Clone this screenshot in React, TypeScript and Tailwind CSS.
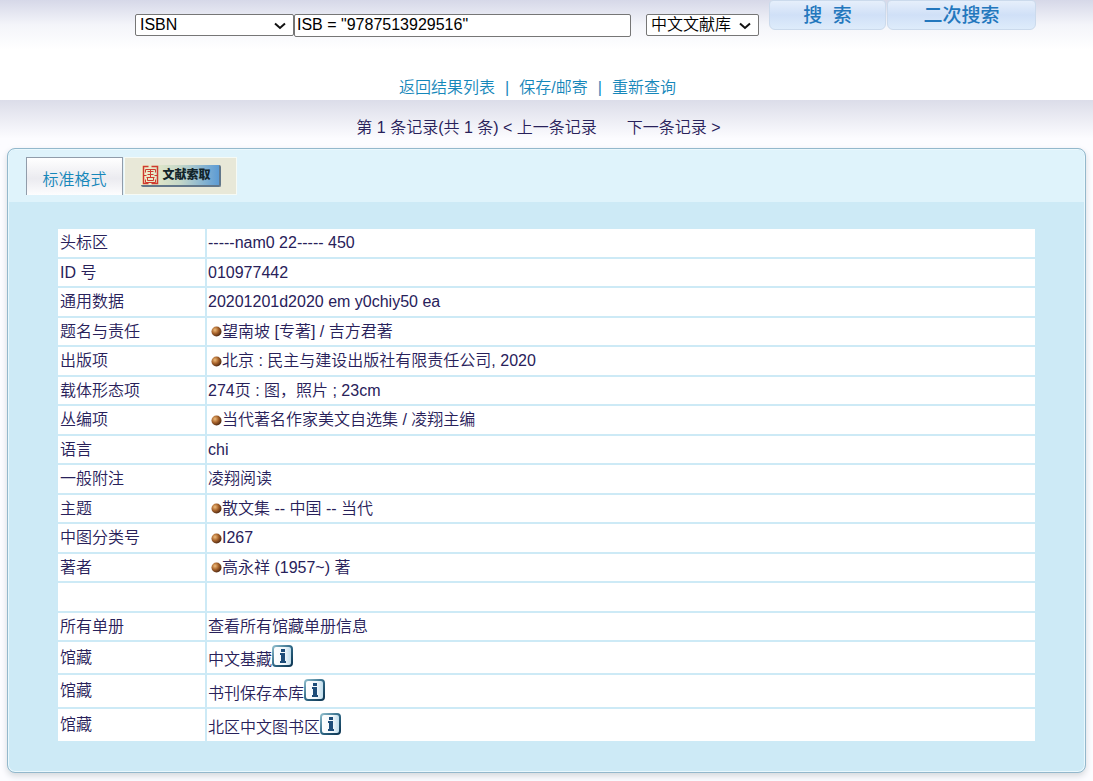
import React, { useState } from "react";

type Field = {
  label: string;
  value: string;
  kind?: "link" | "bullet" | "holding";
};

const record: Field[] = [
  { label: "头标区", value: "-----nam0 22----- 450" },
  { label: "ID 号", value: "010977442" },
  { label: "通用数据", value: "20201201d2020 em y0chiy50 ea" },
  { label: "题名与责任", value: "望南坡 [专著] / 吉方君著", kind: "bullet" },
  { label: "出版项", value: "北京 : 民主与建设出版社有限责任公司, 2020", kind: "bullet" },
  { label: "载体形态项", value: "274页 : 图，照片 ; 23cm" },
  { label: "丛编项", value: "当代著名作家美文自选集 / 凌翔主编", kind: "bullet" },
  { label: "语言", value: "chi" },
  { label: "一般附注", value: "凌翔阅读" },
  { label: "主题", value: "散文集 -- 中国 -- 当代", kind: "bullet" },
  { label: "中图分类号", value: "I267", kind: "bullet" },
  { label: "著者", value: "高永祥 (1957~) 著", kind: "bullet" },
  { label: "", value: "" },
  { label: "所有单册", value: "查看所有馆藏单册信息", kind: "link" },
  { label: "馆藏", value: "中文基藏", kind: "holding" },
  { label: "馆藏", value: "书刊保存本库", kind: "holding" },
  { label: "馆藏", value: "北区中文图书区", kind: "holding" },
];

const Defs = () => (
  <svg width="0" height="0" className="absolute" aria-hidden="true">
    <defs>
      <radialGradient id="ball" cx="0.35" cy="0.35" r="0.7">
        <stop offset="0" stopColor="#f0bd7c" />
        <stop offset="0.5" stopColor="#a8642c" />
        <stop offset="1" stopColor="#4a2510" />
      </radialGradient>
      <linearGradient id="infoEdge" x1="0" y1="0" x2="1" y2="1">
        <stop offset="0" stopColor="#8dbccb" />
        <stop offset="0.5" stopColor="#2f6886" />
        <stop offset="1" stopColor="#0d3552" />
      </linearGradient>
      <linearGradient id="infoFace" x1="0" y1="0" x2="1" y2="0">
        <stop offset="0" stopColor="#ffffff" />
        <stop offset="0.6" stopColor="#f2f8fb" />
        <stop offset="1" stopColor="#b9d9ea" />
      </linearGradient>
    </defs>
  </svg>
);

const Bullet = () => (
  <svg width="11" height="11" viewBox="0 0 11 11" className="ml-[3px] shrink-0" aria-hidden="true">
    <circle cx="5.5" cy="5.5" r="5" fill="url(#ball)" />
  </svg>
);

const InfoIcon = () => (
  <svg width="22" height="22" viewBox="0 0 22 22" aria-hidden="true">
    <rect x="1" y="1" width="19" height="20" rx="3" fill="url(#infoFace)" stroke="url(#infoEdge)" strokeWidth="2" />
    <rect x="9" y="4" width="4" height="3" fill="#1d4c78" />
    <path d="M8 8h5v8h1v2H8v-2h1V10H8z" fill="#1d4c78" />
  </svg>
);

const Chevron = () => (
  <svg
    width="12"
    height="8"
    viewBox="0 0 12 8"
    fill="none"
    stroke="#111"
    strokeWidth="2"
    className="pointer-events-none absolute top-2 right-2"
    aria-hidden="true"
  >
    <path d="M1 1.500l5 4.500 5-4.500" />
  </svg>
);

const Seal = () => (
  <svg width="18" height="20" viewBox="0 0 18 20" fill="none" stroke="#cf3a30" strokeWidth="1" aria-hidden="true">
    <path d="M7.500 1.500h-5v17h5M10.500 1.500h6v17h-6" strokeWidth="1.5" />
    <path d="M2.500 10.500h3M13.500 10.500h3M4.500 7.500v-3h10v3M6.500 6.500h6M9.500 4.500v5M6.500 9.500h6M5.500 12.500h8M9.500 9.500v3M6.500 12.500v3h6v-3M4.500 14.500v3h10v-3" />
  </svg>
);

const Value = ({ field }: { field: Field }) => {
  if (field.kind === "bullet") {
    return (
      <div className="flex items-center">
        <Bullet />
        <a href="#" className="hover:underline">{field.value}</a>
      </div>
    );
  }
  if (field.kind === "holding") {
    return (
      <div className="flex items-start">
        <a href="#" className="mt-[5px] hover:underline">{field.value}</a>
        <a href="#" aria-label={`${field.value} 信息`}>
          <InfoIcon />
        </a>
      </div>
    );
  }
  if (field.kind === "link") {
    return <a href="#" className="hover:underline">{field.value}</a>;
  }
  return <>{field.value}</>;
};

const rowHeight = (index: number) => {
  if (index > 14) return "h-8";
  if (index === 14) return "h-[31px]";
  return index % 2 === 0 ? "h-7" : "h-[27px]";
};

const searchButton =
  "h-[30px] cursor-pointer rounded-b-md rounded-t-sm border border-[#cbdaec] bg-linear-to-b from-[#e6effb] via-[#d0e0f7] to-[#deecfb] text-[19px] leading-none font-medium text-[#2377bd]";

const selectBox =
  "h-[22px] w-full appearance-none rounded-xs border border-[#767676] bg-white pr-6 pl-1 leading-5";

const SearchBar = () => {
  const [query, setQuery] = useState('ISB = "9787513929516"');

  return (
    <form className="flex items-start justify-center pl-[78px] text-black" onSubmit={(e) => e.preventDefault()}>
      <div className="relative mt-3.5 w-[159px]">
        <select aria-label="检索字段" className={selectBox}>
          <option>ISBN</option>
        </select>
        <Chevron />
      </div>
      <input
        aria-label="检索词"
        value={query}
        onChange={(e) => setQuery(e.target.value)}
        className="mt-3.5 h-[23px] w-[337px] rounded-xs border border-[#767676] bg-white px-0.5 pb-0.5"
      />
      <div className="relative mt-3.5 ml-[15px] w-[113px]">
        <select aria-label="数据库" className={selectBox}>
          <option>中文文献库</option>
        </select>
        <Chevron />
      </div>
      <button type="submit" className={`${searchButton} ml-2.5 w-[117px]`}>搜&nbsp; 索</button>
      <button type="button" className={`${searchButton} ml-px w-[149px]`}>二次搜索</button>
    </form>
  );
};

export default function App() {
  return (
    <div className="bg-[#fcfcff] pb-2 font-['Liberation_Sans','Noto_Sans_CJK_SC',sans-serif] text-base leading-5 font-[350] text-[#28215a]">
      <Defs />
      <header className="h-[100px] bg-white bg-linear-to-b from-[#d6d8e8] via-[#f4f5fa] via-25% to-white to-50%">
        <SearchBar />
        <nav className="mt-[41px] flex justify-center gap-2.5 pr-[18px] text-[#1687ba]">
          <a href="#">返回结果列表</a>
          <span>|</span>
          <a href="#">保存/邮寄</a>
          <span>|</span>
          <a href="#">重新查询</a>
        </nav>
      </header>

      <div className="flex h-12 items-center justify-center bg-linear-to-b from-[#dcdde9] to-[#fcfcff] to-80% pt-2 pr-4">
        <span>第 1 条记录(共 1 条)&nbsp;</span>
        <a href="#">&lt; 上一条记录</a>
        <a href="#" className="ml-[30px]">下一条记录 &gt;</a>
      </div>

      <main className="mx-[7px] overflow-hidden rounded-lg border border-[#93b8cc] bg-[#cdeaf6] pb-[29px] shadow-[inset_0_0_0_1px_#eaf8fd,0_3px_6px_#d5d9dd]">
        <div className="m-px flex h-[52px] items-start rounded-t-md bg-[#dff3fb] pt-[7px] pl-[17px]">
          <a
            href="#"
            className="flex h-[38px] w-[97px] items-center justify-center border border-b-0 border-[#919caa] bg-linear-to-b from-white via-[#ebebf0] via-55% to-[#fdfdfe] pt-1.5 text-[#1687ba]"
          >
            标准格式
          </a>
          <a href="#" className="ml-px flex h-[38px] w-[113px] items-center justify-center border border-[#f6faf5] bg-[#e8e8d8]">
            <span className="flex h-[22px] w-20 items-center gap-1 rounded-xs border-r-2 border-b-2 border-[#62778a] bg-linear-to-r from-[#f3f0c8] via-[#c4d7c8] to-[#5c9bd4]">
              <Seal />
              <span className="text-xs font-black whitespace-nowrap text-[#13252b]">文献索取</span>
            </span>
          </a>
        </div>

        <div className="mx-12 mt-[25px]">
          <table className="w-full border-separate border-spacing-0.5">
            <tbody>
              {record.map((field, i) => (
                <tr key={i} className={rowHeight(i)}>
                  <th scope="row" className="w-[147px] bg-white px-0.5 py-0 text-left align-middle font-[350]">
                    {field.label}
                  </th>
                  <td className="bg-white px-px py-0 align-middle">
                    <Value field={field} />
                  </td>
                </tr>
              ))}
            </tbody>
          </table>
        </div>
      </main>
    </div>
  );
}
